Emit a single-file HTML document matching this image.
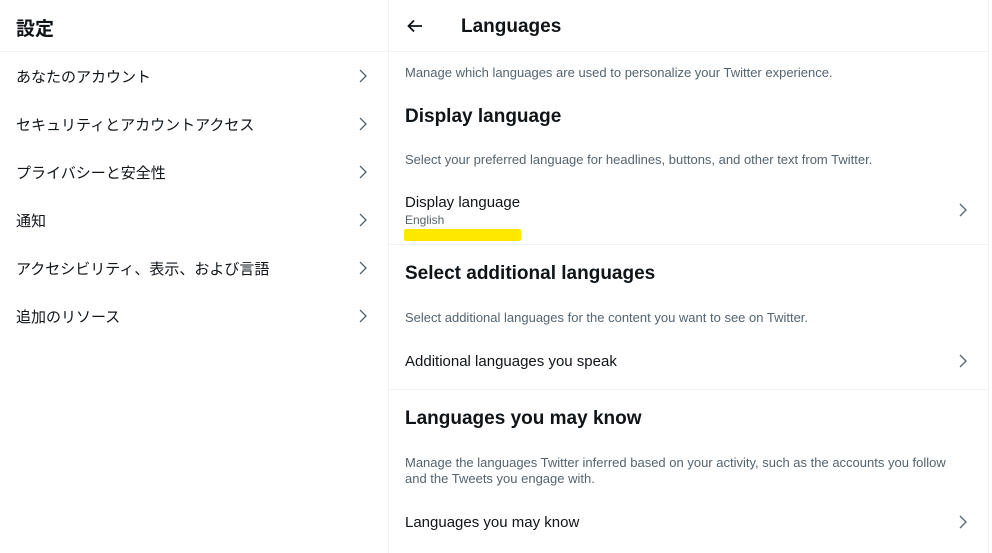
<!DOCTYPE html>
<html><head><meta charset="utf-8"><style>
*{margin:0;padding:0;box-sizing:border-box}
body{width:992px;height:553px;background:#fff;font-family:"Liberation Sans","Noto Sans CJK JP",sans-serif;color:#0f1419;position:relative;overflow:hidden}
.a{position:absolute;white-space:nowrap}
.hl{position:absolute;height:1px;background:#eff3f4}
.vl{position:absolute;width:1px;background:#eff3f4;top:0;height:553px}
.jp{font-size:15px}
.sm{font-size:13px;color:#536471}
.h2{font-size:19px;font-weight:bold}
.b{font-size:15px}
.chev{position:absolute;width:10px;height:14px}
</style></head><body>
<div class="vl" style="left:388px"></div>
<div class="vl" style="left:988px"></div>
<div class="hl" style="left:0;width:388px;top:51px"></div>
<div class="hl" style="left:389px;width:599px;top:51px"></div>
<div class="hl" style="left:389px;width:599px;top:244px"></div>
<div class="hl" style="left:389px;width:599px;top:389px"></div>

<div class="a" style="left:16px;top:14px;font-size:19px;font-weight:bold">設定</div>
<div class="a jp" style="left:16px;top:66px">あなたのアカウント</div>
<div class="a jp" style="left:16px;top:114px">セキュリティとアカウントアクセス</div>
<div class="a jp" style="left:16px;top:162px">プライバシーと安全性</div>
<div class="a jp" style="left:16px;top:210px">通知</div>
<div class="a jp" style="left:16px;top:258px">アクセシビリティ、表示、および言語</div>
<div class="a jp" style="left:16px;top:306px">追加のリソース</div>

<svg class="chev" style="left:358px;top:69px" viewBox="0 0 10 14"><path d="M2 1l6 6-6 6" fill="none" stroke="#536471" stroke-width="1.3"/></svg>
<svg class="chev" style="left:358px;top:117px" viewBox="0 0 10 14"><path d="M2 1l6 6-6 6" fill="none" stroke="#536471" stroke-width="1.3"/></svg>
<svg class="chev" style="left:358px;top:165px" viewBox="0 0 10 14"><path d="M2 1l6 6-6 6" fill="none" stroke="#536471" stroke-width="1.3"/></svg>
<svg class="chev" style="left:358px;top:213px" viewBox="0 0 10 14"><path d="M2 1l6 6-6 6" fill="none" stroke="#536471" stroke-width="1.3"/></svg>
<svg class="chev" style="left:358px;top:261px" viewBox="0 0 10 14"><path d="M2 1l6 6-6 6" fill="none" stroke="#536471" stroke-width="1.3"/></svg>
<svg class="chev" style="left:358px;top:309px" viewBox="0 0 10 14"><path d="M2 1l6 6-6 6" fill="none" stroke="#536471" stroke-width="1.3"/></svg>

<svg style="position:absolute;left:406px;top:18px" width="18" height="16" viewBox="0 0 18 16"><path d="M16 8H3M8 2.5L2.5 8 8 13.5" fill="none" stroke="#0f1419" stroke-width="1.8"/></svg>
<div class="a" style="left:461px;top:16px;font-size:19px;font-weight:bold">Languages</div>

<div class="a sm" style="left:405px;top:65px">Manage which languages are used to personalize your Twitter experience.</div>
<div class="a h2" style="left:405px;top:106px">Display language</div>
<div class="a sm" style="left:405px;top:152px">Select your preferred language for headlines, buttons, and other text from Twitter.</div>
<div class="a b" style="left:405px;top:194px">Display language</div>
<div class="a" style="left:405px;top:213px;font-size:12px;color:#536471">English</div>
<div style="position:absolute;left:404px;top:229px;width:117px;height:12px;background:#ffe800;border-radius:2px"></div>
<svg class="chev" style="left:958px;top:203px" viewBox="0 0 10 14"><path d="M2 1l6 6-6 6" fill="none" stroke="#536471" stroke-width="1.3"/></svg>

<div class="a h2" style="left:405px;top:263px">Select additional languages</div>
<div class="a sm" style="left:405px;top:310px">Select additional languages for the content you want to see on Twitter.</div>
<div class="a b" style="left:405px;top:353px">Additional languages you speak</div>
<svg class="chev" style="left:958px;top:354px" viewBox="0 0 10 14"><path d="M2 1l6 6-6 6" fill="none" stroke="#536471" stroke-width="1.3"/></svg>

<div class="a h2" style="left:405px;top:408px">Languages you may know</div>
<div class="a sm" style="left:405px;top:455px;line-height:16px">Manage the languages Twitter inferred based on your activity, such as the accounts you follow<br>and the Tweets you engage with.</div>
<div class="a b" style="left:405px;top:514px">Languages you may know</div>
<svg class="chev" style="left:958px;top:515px" viewBox="0 0 10 14"><path d="M2 1l6 6-6 6" fill="none" stroke="#536471" stroke-width="1.3"/></svg>
</body></html>
